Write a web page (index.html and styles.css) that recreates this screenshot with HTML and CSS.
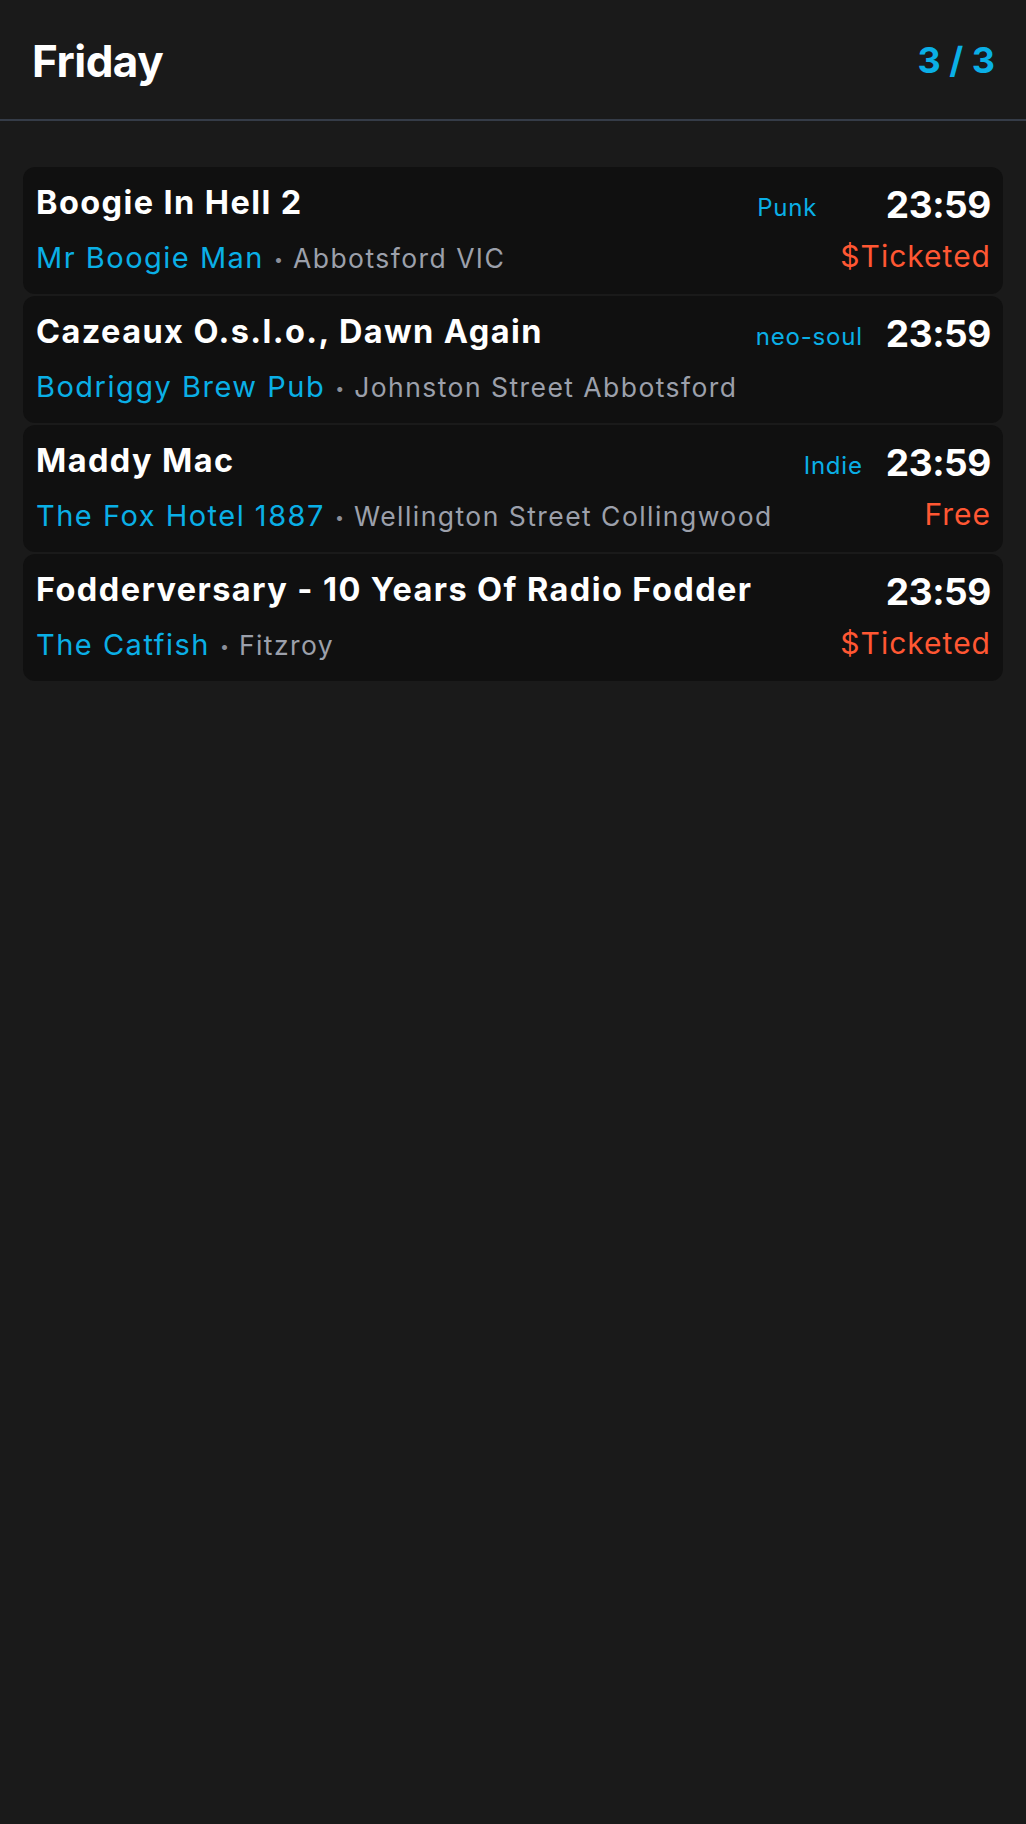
FILE: index.html
```html
<!DOCTYPE html>
<html lang="en">
<head>
<meta charset="utf-8">
<title>Friday</title>
<link rel="stylesheet" href="styles.css">
</head>
<body>
<header class="topbar">
  <h1 class="day">Friday</h1>
  <div class="count">3 / 3</div>
</header>
<main class="list">
  <article class="card">
    <div class="main">
      <div class="title">Boogie In Hell 2</div>
      <div class="where"><span class="venue">Mr Boogie Man</span><span class="dot">•</span><span class="place">Abbotsford VIC</span></div>
    </div>
    <div class="genre">Punk</div>
    <div class="side">
      <div class="time">23:59</div>
      <div class="price">$Ticketed</div>
    </div>
  </article>
  <article class="card">
    <div class="main">
      <div class="title">Cazeaux O.s.l.o., Dawn Again</div>
      <div class="where"><span class="venue">Bodriggy Brew Pub</span><span class="dot">•</span><span class="place">Johnston Street Abbotsford</span></div>
    </div>
    <div class="genre">neo-soul</div>
    <div class="side">
      <div class="time">23:59</div>
    </div>
  </article>
  <article class="card">
    <div class="main">
      <div class="title">Maddy Mac</div>
      <div class="where"><span class="venue">The Fox Hotel 1887</span><span class="dot">•</span><span class="place">Wellington Street Collingwood</span></div>
    </div>
    <div class="genre">Indie</div>
    <div class="side">
      <div class="time">23:59</div>
      <div class="price">Free</div>
    </div>
  </article>
  <article class="card">
    <div class="main">
      <div class="title">Fodderversary - 10 Years Of Radio Fodder</div>
      <div class="where"><span class="venue">The Catfish</span><span class="dot">•</span><span class="place">Fitzroy</span></div>
    </div>
    <div class="side">
      <div class="time">23:59</div>
      <div class="price">$Ticketed</div>
    </div>
  </article>
</main>
</body>
</html>
```
FILE: styles.css
```css
html, body {
  margin: 0;
  padding: 0;
}
body {
  background: #1a1a1a;
  min-height: 1824px;
  font-family: Inter, "Noto Sans", "Liberation Sans", sans-serif;
  color: #ffffff;
}
.topbar {
  box-sizing: border-box;
  height: 121px;
  display: flex;
  justify-content: space-between;
  align-items: flex-start;
  padding: 35px 31px 0 32px;
  border-bottom: 2px solid #353c48;
}
.day {
  margin: 0;
  font-size: 44px;
  line-height: 52px;
  font-weight: 700;
  letter-spacing: -0.5px;
}
.count {
  margin-top: 3px;
  font-size: 36px;
  line-height: 44px;
  font-weight: 700;
  color: #0aafe6;
}
.list {
  display: flex;
  flex-direction: column;
  gap: 2px;
  padding: 46px 23px;
}
.card {
  box-sizing: border-box;
  height: 127px;
  display: flex;
  align-items: flex-start;
  padding: 16px 12px 0 13px;
  background: #101010;
  border-radius: 12px;
}
.main {
  flex: 1;
  min-width: 0;
}
.title {
  font-size: 32.5px;
  line-height: 40px;
  font-weight: 700;
  letter-spacing: 1.4px;
  white-space: nowrap;
}
.where {
  margin-top: 17px;
  line-height: 36px;
  white-space: nowrap;
}
.venue {
  font-size: 29px;
  letter-spacing: 1.5px;
  color: #0aafe6;
}
.dot {
  font-size: 16px;
  color: #8b8f99;
  margin: 0 10px 0 10px;
  vertical-align: 3px;
}
.place {
  font-size: 26.5px;
  letter-spacing: 1.45px;
  color: #9ca0ab;
}
.genre {
  margin-top: 10px;
  margin-right: 23px;
  font-size: 24px;
  line-height: 30px;
  letter-spacing: 0.8px;
  color: #0aafe6;
}
.side {
  display: flex;
  flex-direction: column;
  align-items: flex-end;
}
.time {
  font-size: 37px;
  line-height: 44px;
  font-weight: 700;
  letter-spacing: -0.4px;
}
.price {
  margin-top: 11px;
  font-size: 30px;
  line-height: 36px;
  letter-spacing: 1px;
  color: #ff5733;
}
```
